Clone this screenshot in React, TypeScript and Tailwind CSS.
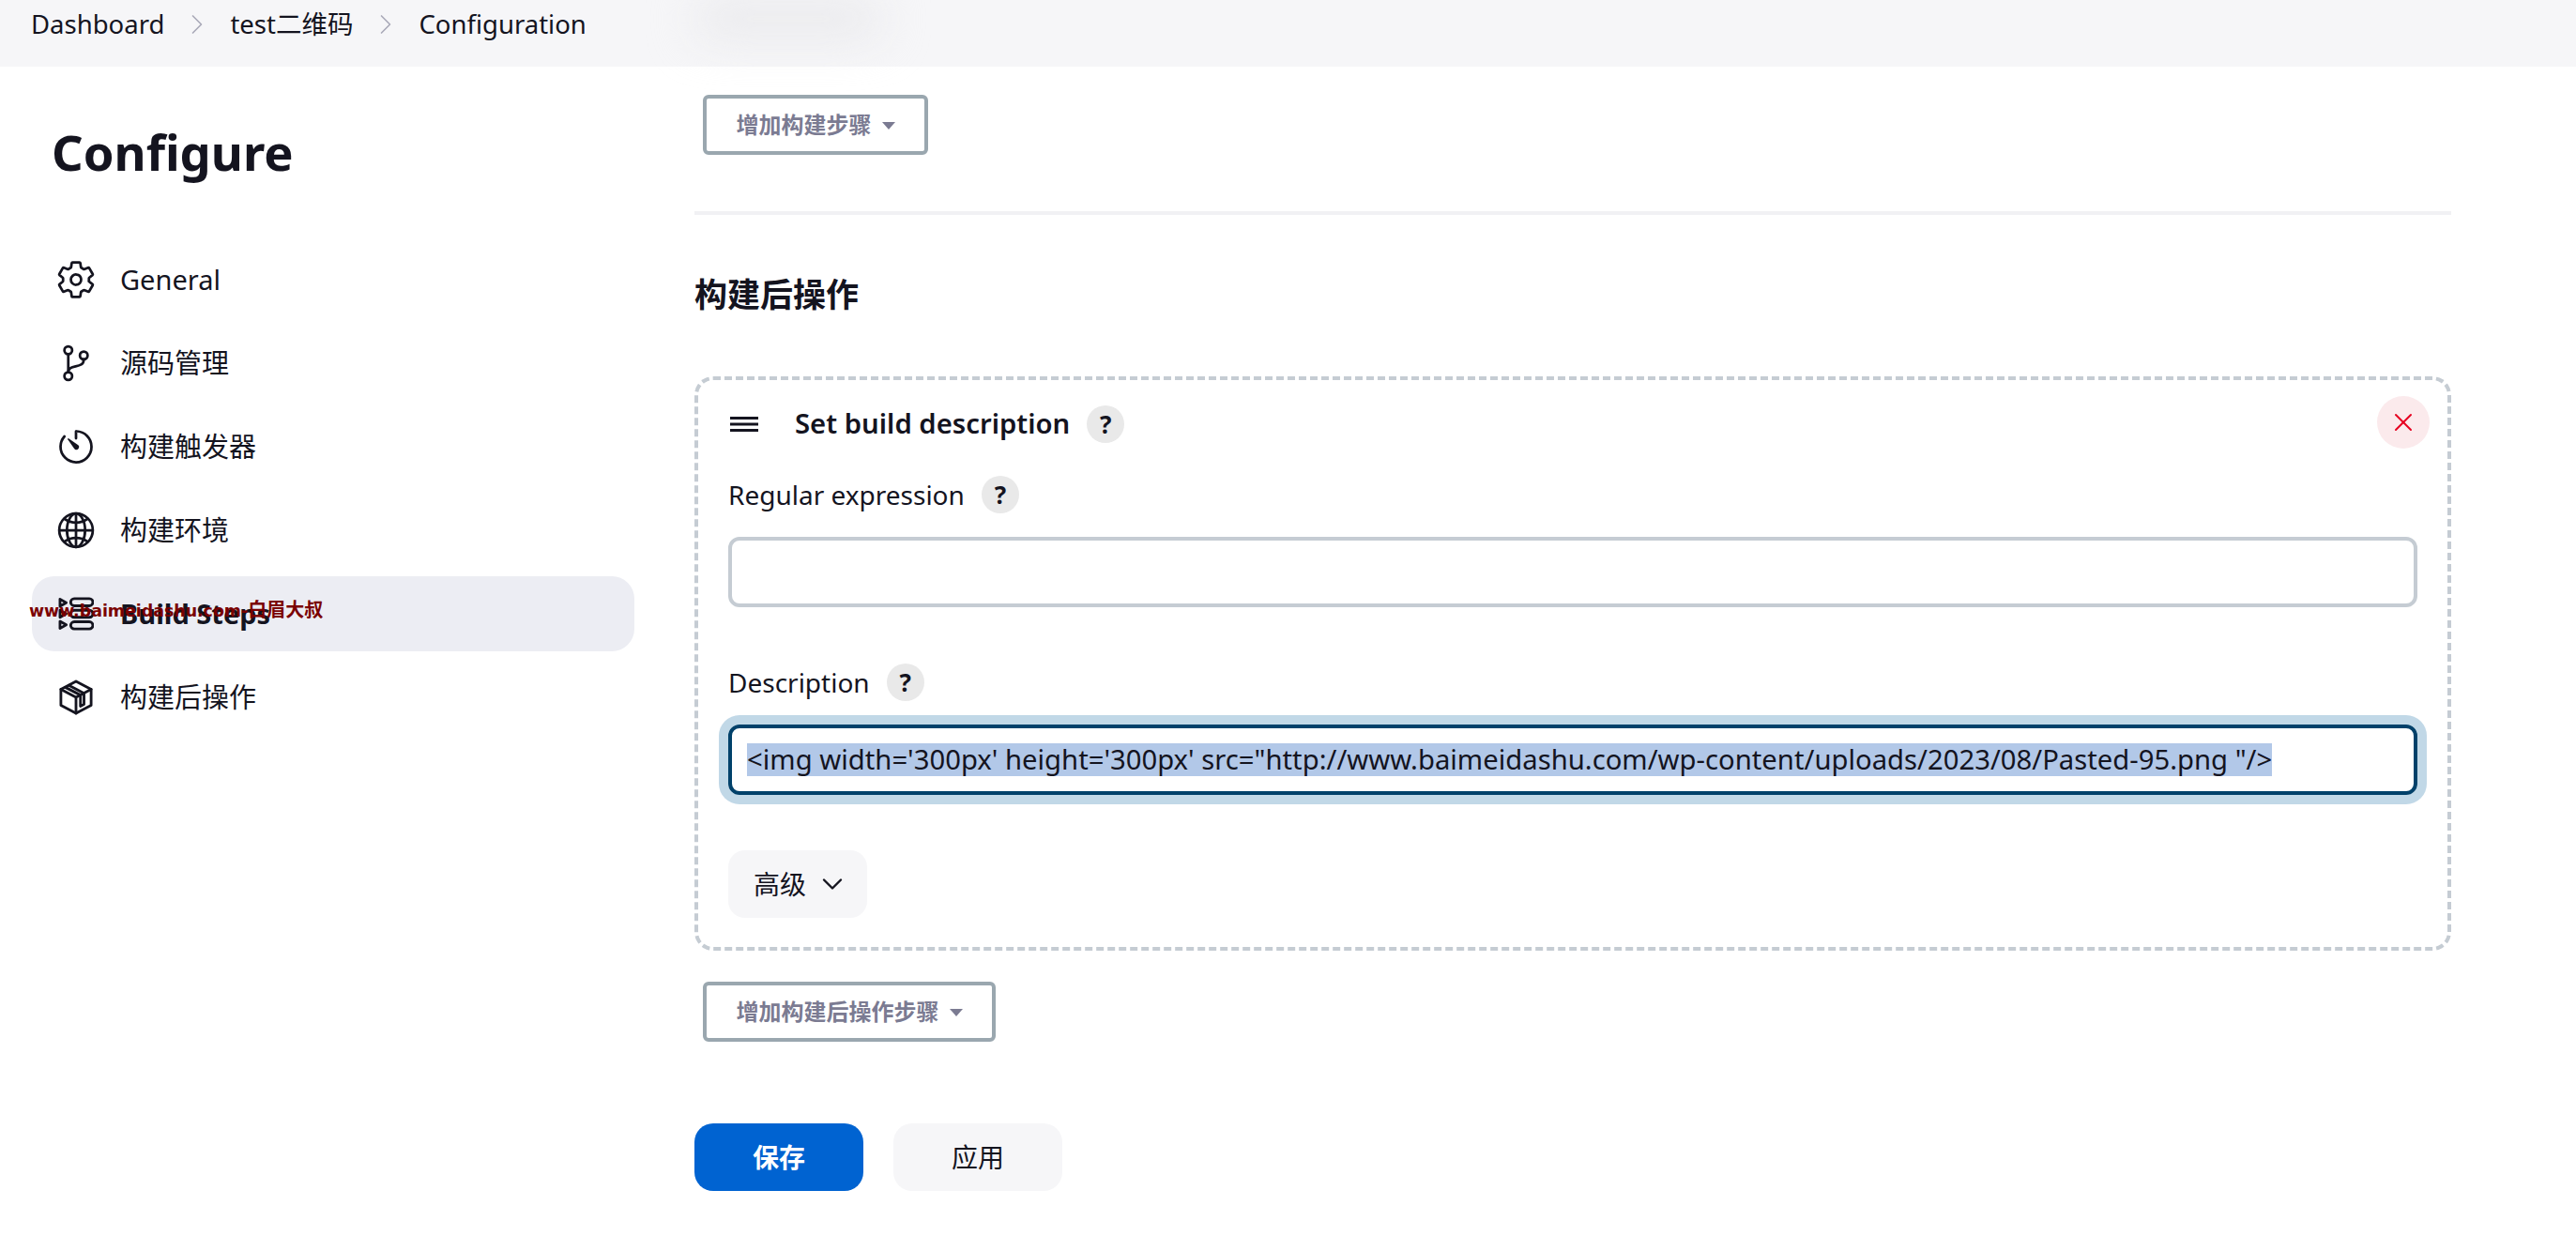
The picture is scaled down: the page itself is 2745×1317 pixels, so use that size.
import { ChevronDown, ChevronRight, X } from 'lucide-react';
import { IoGitBranchOutline, IoGlobeOutline, IoSettingsOutline, IoTimerOutline } from 'react-icons/io5';

const FONT = "font-['Noto_Sans','Noto_Sans_CJK_SC',sans-serif]";

function StepsIcon() {
  return (
    <svg viewBox="0 0 40 38" className="h-[36px] w-[38px]" fill="none" stroke="currentColor" strokeWidth="3" strokeLinejoin="round">
      <path d="M2 2.5 9 6.5 2 10.5Z" />
      <path d="M2 15 9 19 2 23Z" />
      <path d="M2 27.5 9 31.5 2 35.5Z" />
      <rect x="14" y="2" width="25" height="8" rx="4" />
      <rect x="14" y="15" width="25" height="8" rx="4" />
      <rect x="14" y="28" width="25" height="8" rx="4" />
    </svg>
  );
}

function BoxIcon() {
  return (
    <svg viewBox="0 0 38 40" className="h-[38px] w-[36px]" fill="none" stroke="currentColor" strokeWidth="3" strokeLinejoin="round" strokeLinecap="round">
      <path d="M19 2 36 11V29L19 38 2 29V11Z" />
      <path d="M2 11 19 20 36 11M19 20V38" />
      <path d="M11 6.5 28 15.5V28L24 30V17.5L7 8.8" />
    </svg>
  );
}

const NAV = [
  { label: 'General', icon: <IoSettingsOutline className="h-[44px] w-[44px] shrink-0" /> },
  { label: '源码管理', icon: <IoGitBranchOutline className="h-[44px] w-[44px] shrink-0" /> },
  { label: '构建触发器', icon: <IoTimerOutline className="h-[44px] w-[44px] shrink-0" /> },
  { label: '构建环境', icon: <IoGlobeOutline className="h-[44px] w-[44px] shrink-0" /> },
  { label: 'Build Steps', icon: <StepsIcon />, active: true },
  { label: '构建后操作', icon: <BoxIcon /> },
];

function Help() {
  return (
    <span className="flex h-10 w-10 shrink-0 items-center justify-center rounded-full bg-[#e9e9e9] text-[26px] font-bold text-[#14141f]">?</span>
  );
}

function AddButton({ label, className }: { label: string; className: string }) {
  return (
    <div className={`flex h-16 items-center justify-center gap-[11px] rounded-[6px] border-4 border-[#9aa7af] text-[24px] font-bold leading-none text-[#7b7b92] ${className}`}>
      <span>{label}</span>
      <span className="mt-[1px] h-0 w-0 border-x-[7px] border-t-[8px] border-x-transparent border-t-[#7b7b92]" />
    </div>
  );
}

export default function App() {
  return (
    <div className={`${FONT} relative h-[1317px] overflow-hidden bg-white text-[#14141f]`}>
      <header className="relative flex h-[71px] items-center bg-[#f6f6f8] pb-[19px] pl-[33px] text-[27.5px] leading-none">
        <span>Dashboard</span>
        <ChevronRight className="mx-[17px] h-9 w-9 text-[#a9a9b8]" strokeWidth={1.1} />
        <span>test二维码</span>
        <ChevronRight className="mx-[17px] h-9 w-9 text-[#a9a9b8]" strokeWidth={1.1} />
        <span>Configuration</span>
        <div className="absolute left-[740px] top-0 h-[40px] w-[200px] rounded-full bg-[#e9e9ec] blur-xl" />
      </header>

      <div className="flex">
        <aside className="w-[740px] shrink-0 pl-[34px]">
          <h1 className="ml-[21px] mt-[51px] text-[52.5px] font-bold leading-[80px]">Configure</h1>
          <nav className="mt-[56px] flex w-[642px] flex-col gap-[9px]">
            {NAV.map((item) => (
              <div
                key={item.label}
                className={`relative flex h-20 items-center gap-[28px] rounded-[24px] pl-[28px] text-[29px] ${item.active ? 'bg-[#ecedf3] font-bold' : ''}`}
              >
                <span className="flex w-[38px] justify-center">{item.icon}</span>
                <span>{item.label}</span>
                {item.active && (
                  <span className="absolute left-[-3px] top-[26px] whitespace-nowrap font-['DejaVu_Sans','Noto_Sans_CJK_SC',sans-serif] text-[20px] font-bold leading-none text-[#7a0000]">
                    <span className="text-[17.4px]">www.baimeidashu.com-</span>白眉大叔
                  </span>
                )}
              </div>
            ))}
          </nav>
        </aside>

        <main className="w-[1872px] pt-[30px]">
          <AddButton label="增加构建步骤" className="ml-[9px] w-[240px]" />
          <div className="mt-[60px] h-[4px] bg-[#f1f1f4]" />
          <h2 className="mt-[60px] text-[35px] font-bold leading-[50px]">构建后操作</h2>

          <section className="relative mt-[62px] h-[612px] rounded-[20px] border-4 border-dashed border-[#c5ccd3] pl-[32px] pr-[32px] pt-[27px]">
            <div className="flex h-10 items-center">
              <svg viewBox="0 0 30 16" className="ml-[2px] h-4 w-[30px]" fill="none" stroke="currentColor" strokeWidth="3">
                <path d="M0 1.5H30M0 8H30M0 14.5H30" />
              </svg>
              <span className="ml-[39px] text-[29.3px] font-semibold leading-none">Set build description</span>
              <span className="ml-[18px]"><Help /></span>
            </div>
            <div className="absolute right-[19px] top-[17px] flex h-14 w-14 items-center justify-center rounded-full bg-[#fbeaec] text-[#e6001f]">
              <X className="h-8 w-8" strokeWidth={1.5} />
            </div>

            <div className="mt-[35px] flex h-10 items-center gap-[18px] text-[28px]">
              <span>Regular expression</span>
              <Help />
            </div>
            <div className="mt-[25px] h-[75px] rounded-[12px] border-4 border-[#c5ccd3]" />

            <div className="mt-[60px] flex h-10 items-center gap-[18px] text-[28px]">
              <span>Description</span>
              <Help />
            </div>
            <div className="mt-[25px] flex h-[75px] items-center rounded-[12px] border-4 border-[#00416a] pl-[16px] ring-[10px] ring-[#c1d8e7]">
              <span className="whitespace-nowrap bg-[#b2c8e8] text-[29.25px] leading-[35px]">
                {`<img width='300px' height='300px' src="http://www.baimeidashu.com/wp-content/uploads/2023/08/Pasted-95.png "/>`}
              </span>
            </div>

            <div className="mt-[59px] flex h-[72px] w-[148px] items-center gap-[10px] rounded-[18px] bg-[#f6f6f8] pl-[27px] text-[28px]">
              <span>高级</span>
              <ChevronDown className="h-9 w-9 shrink-0" strokeWidth={1.6} />
            </div>
          </section>

          <AddButton label="增加构建后操作步骤" className="ml-[9px] mt-[33px] w-[312px]" />

          <div className="mt-[87px] flex gap-[32px] text-[28px]">
            <div className="flex h-[72px] w-[180px] items-center justify-center rounded-[20px] bg-[#0063d1] font-bold text-white">保存</div>
            <div className="flex h-[72px] w-[180px] items-center justify-center rounded-[20px] bg-[#f6f6f8]">应用</div>
          </div>
        </main>
      </div>
    </div>
  );
}
